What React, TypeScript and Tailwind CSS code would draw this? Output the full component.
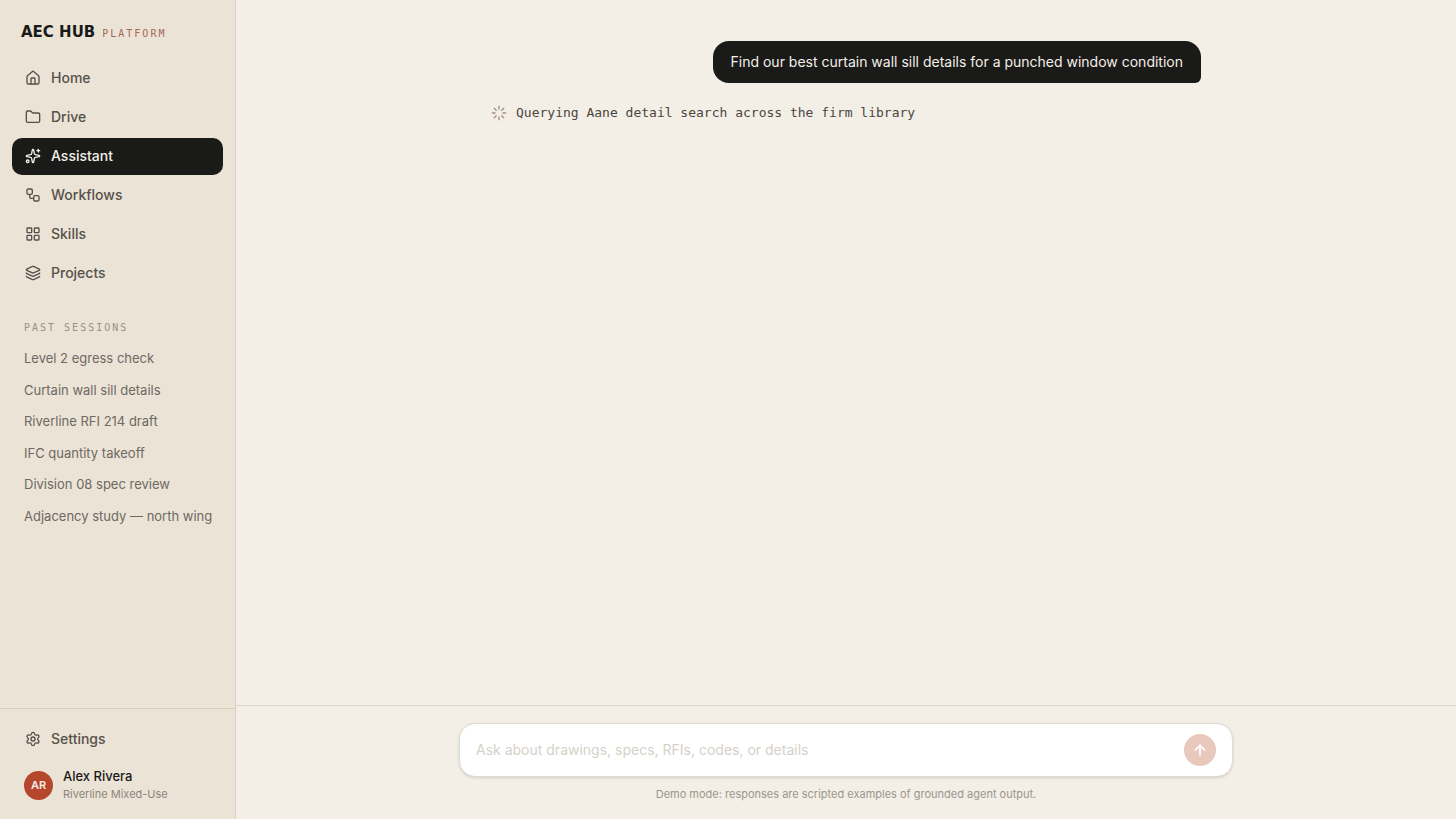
import { useState } from "react";
import {
  ArrowUp,
  Folder,
  House,
  Layers,
  LayoutGrid,
  Loader,
  Settings,
  Workflow,
  type LucideIcon,
} from "lucide-react";

function AssistantIcon({ className }: { className?: string }) {
  return (
    <svg
      className={className}
      viewBox="0 0 24 24"
      fill="none"
      stroke="currentColor"
      strokeWidth="2"
      strokeLinecap="round"
      strokeLinejoin="round"
      aria-hidden="true"
    >
      <path d="M11.017 2.814a1 1 0 0 1 1.966 0l1.051 5.558a2 2 0 0 0 1.594 1.594l5.558 1.051a1 1 0 0 1 0 1.966l-5.558 1.051a2 2 0 0 0-1.594 1.594l-1.051 5.558a1 1 0 0 1-1.966 0l-1.051-5.558a2 2 0 0 0-1.594-1.594l-5.558-1.051a1 1 0 0 1 0-1.966l5.558-1.051a2 2 0 0 0 1.594-1.594z" />
      <path d="M20 2v4" />
      <path d="M22 4h-4" />
      <circle cx="4" cy="20" r="2" />
    </svg>
  );
}

const navItems: { label: string; icon: LucideIcon | typeof AssistantIcon }[] = [
  { label: "Home", icon: House },
  { label: "Drive", icon: Folder },
  { label: "Assistant", icon: AssistantIcon },
  { label: "Workflows", icon: Workflow },
  { label: "Skills", icon: LayoutGrid },
  { label: "Projects", icon: Layers },
];

const sessions = [
  "Level 2 egress check",
  "Curtain wall sill details",
  "Riverline RFI 214 draft",
  "IFC quantity takeoff",
  "Division 08 spec review",
  "Adjacency study — north wing",
];

function NavLink({
  label,
  icon: Icon,
  active = false,
}: {
  label: string;
  icon: LucideIcon | typeof AssistantIcon;
  active?: boolean;
}) {
  return (
    <a
      href="#"
      aria-current={active ? "page" : undefined}
      className={
        active
          ? "flex items-center gap-2.5 rounded-[10px] bg-[#1a1a19] px-[13px] pt-[7px] pb-[9px] text-sm/[21px] font-medium text-[#f4efe7]"
          : "flex items-center gap-2.5 rounded-[10px] px-[13px] pt-[7px] pb-[9px] text-sm/[21px] font-medium text-[#55514b]"
      }
    >
      <Icon className="size-4 shrink-0" />
      {label}
    </a>
  );
}

function Sidebar() {
  return (
    <aside className="flex w-[236px] shrink-0 flex-col border-r border-[#d8d2c5] bg-[#ebe3d6]">
      <div className="flex items-baseline gap-[7px] px-[21px] pt-5 pb-4">
        <span className="font-['DejaVu_Sans',sans-serif] text-[15px]/6 font-bold text-[#1a1a19]">
          AEC HUB
        </span>
        <span className="font-['DejaVu_Sans_Mono',monospace] text-[10px] tracking-[0.2em] text-[#a3685a]">
          PLATFORM
        </span>
      </div>
      <nav aria-label="Main" className="flex flex-col gap-0.5 px-3">
        {navItems.map((item) => (
          <NavLink key={item.label} {...item} active={item.label === "Assistant"} />
        ))}
      </nav>
      <section className="px-3 pt-7">
        <h2 className="px-3 pb-[7px] font-['DejaVu_Sans_Mono',monospace] text-[10px]/4 tracking-[0.2em] text-[#98918a]">
          PAST SESSIONS
        </h2>
        <ul>
          {sessions.map((session) => (
            <li key={session}>
              <a
                href="#"
                className="block truncate py-1.5 pl-3 text-[13px] leading-normal text-[#6e6962]"
              >
                {session}
              </a>
            </li>
          ))}
        </ul>
      </section>
      <div className="mt-auto border-t border-[#d6cebf] px-3 pt-3 pb-4">
        <NavLink label="Settings" icon={Settings} />
        <div className="flex items-center gap-2.5 px-3 pt-[9px]">
          <span className="flex size-[29px] shrink-0 items-center justify-center rounded-full bg-[#b5482c] text-[11px] font-semibold text-[#f7ece4]">
            AR
          </span>
          <div className="min-w-0">
            <p className="text-[13px]/[18px] font-medium text-[#1a1a19]">Alex Rivera</p>
            <p className="text-[11px]/[18px] text-[#8b857c]">Riverline Mixed-Use</p>
          </div>
        </div>
      </div>
    </aside>
  );
}

export default function App() {
  const [draft, setDraft] = useState("");

  return (
    <div className="flex h-screen bg-[#f3eee6] font-[Inter,sans-serif] text-[#1a1a19]">
      <Sidebar />
      <main className="flex min-w-0 flex-1 flex-col">
        <div className="min-h-0 flex-1 overflow-y-auto px-6 pt-[41px]">
          <div className="mx-auto flex max-w-[710px] flex-col gap-5">
            <p className="self-end rounded-2xl rounded-br-md bg-[#1a1a19] px-[18px] py-2.5 text-sm/[22px] text-[#f4efe7]">
              Find our best curtain wall sill details for a punched window condition
            </p>
            <p
              role="status"
              className="flex items-center gap-[9px] font-['DejaVu_Sans_Mono',monospace] text-[13px]/5 text-[#4a4640]"
            >
              <Loader className="size-4 shrink-0 text-[#a68f7e]" />
              Querying Aane detail search across the firm library
            </p>
          </div>
        </div>
        <footer className="border-t border-[#ddd6ca] px-6 pt-[17px] pb-4">
          <form
            onSubmit={(event) => event.preventDefault()}
            className="mx-auto flex h-[54px] max-w-[774px] items-center rounded-2xl border border-[#e0dacf] bg-white px-4 shadow-sm"
          >
            <input
              type="text"
              aria-label="Message"
              value={draft}
              onChange={(event) => setDraft(event.target.value)}
              placeholder="Ask about drawings, specs, RFIs, codes, or details"
              className="min-w-0 flex-1 bg-transparent text-sm outline-none placeholder:text-[#d5d1ca]"
            />
            <button
              type="submit"
              aria-label="Send"
              className="flex size-8 shrink-0 items-center justify-center rounded-full bg-[#e9c8bd] text-[#fdf8f3]"
            >
              <ArrowUp className="size-4" strokeWidth={3} />
            </button>
          </form>
          <p className="pt-2 text-center text-[11px]/[18px] text-[#9c968d]">
            Demo mode: responses are scripted examples of grounded agent output.
          </p>
        </footer>
      </main>
    </div>
  );
}
